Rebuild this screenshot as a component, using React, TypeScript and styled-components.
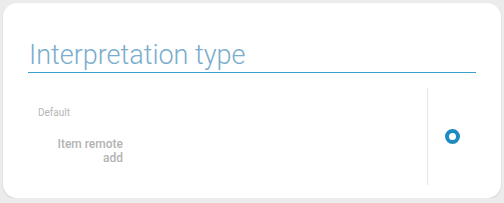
import styled, { createGlobalStyle } from "styled-components";

const GlobalStyle = createGlobalStyle`
  html, body {
    margin: 0;
    padding: 0;
    background: #ececec;
    font-family: Roboto, "Liberation Sans", sans-serif;
  }
`;

const Card = styled.div`
  box-sizing: border-box;
  margin: 3px 0 0 3px;
  width: 498px;
  height: 195px;
  background: #ffffff;
  border-radius: 14px;
  box-shadow: 0 1px 2px rgba(0, 0, 0, 0.12);
  padding: 0 25px;
`;

const TitleBar = styled.div`
  padding-top: 36px;
  border-bottom: 1px solid #3a9fcf;
`;

const Title = styled.h2`
  margin: 0 0 0 1px;
  font-weight: 300;
  font-size: 27px;
  line-height: 33px;
  color: #7aadcd;
`;

const Body = styled.div`
  display: flex;
  margin-top: 15px;
  height: 97px;
`;

const Content = styled.div`
  flex: 1;
  padding: 19px 0 0 10px;
  border-right: 1px solid #e6e6e6;
`;

const Caption = styled.div`
  font-size: 10px;
  line-height: 12px;
  color: #b5b5b5;
`;

const ItemLabel = styled.div`
  width: 85px;
  margin-top: 18px;
  text-align: right;
  font-size: 12px;
  font-weight: 500;
  line-height: 14px;
  color: #b3b3b3;
`;

const Side = styled.div`
  width: 48px;
  display: flex;
  align-items: center;
  justify-content: center;
`;

const Radio = styled.span<{ $checked?: boolean }>`
  box-sizing: border-box;
  width: 15px;
  height: 15px;
  border-radius: 50%;
  border: 4px solid ${(p) => (p.$checked ? "#1f8ac2" : "#c8c8c8")};
  background: #fff;
`;

export default function App() {
  return (
    <>
      <GlobalStyle />
      <Card>
        <TitleBar>
          <Title>Interpretation type</Title>
        </TitleBar>
        <Body>
          <Content>
            <Caption>Default</Caption>
            <ItemLabel>
              Item remote
              <br />
              add
            </ItemLabel>
          </Content>
          <Side>
            <Radio $checked />
          </Side>
        </Body>
      </Card>
    </>
  );
}
